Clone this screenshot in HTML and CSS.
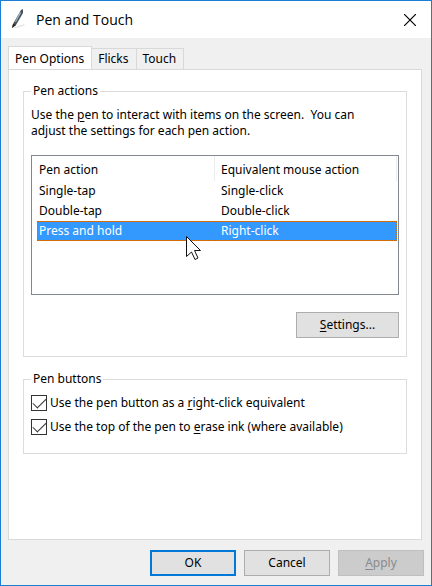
FILE: index.html
```html
<!DOCTYPE html>
<html lang="en">

<head>
    <meta charset="UTF-8">
    <meta name="viewport" content="width=device-width, initial-scale=1.0">
    <title>Pen and Touch</title>
    <link rel="stylesheet" href="styles.css">
</head>

<body>

    <div class="window">
        <header class="titlebar">
            <svg class="pen-icon" viewBox="0 0 16 22" aria-hidden="true">
                <path d="M2 19 L14 15 L12 17 L4 19 Z" fill="#dcdcdc" />
                <path d="M10 1 L12 0 L12 4 L5 16 L1 19 L2 15 Z" fill="#4b5258" />
                <path d="M9 3 L10 4 L5 13 L4 13 Z" fill="#9cc3d3" />
                <path d="M2 15 L5 16 L1 19 Z" fill="#222" />
            </svg>
            <h1>Pen and Touch</h1>
            <button class="close" aria-label="Close">
                <svg viewBox="0 0 12 12" aria-hidden="true">
                    <path d="M0 0 L12 12 M12 0 L0 12" stroke="#000" stroke-width="1.2" />
                </svg>
            </button>
        </header>

        <main class="content">
            <div class="tabs" role="tablist">
                <button class="tab active" role="tab" aria-selected="true">Pen Options</button>
                <button class="tab" role="tab" aria-selected="false">Flicks</button>
                <button class="tab" role="tab" aria-selected="false">Touch</button>
            </div>

            <div class="panel" role="tabpanel">
                <fieldset>
                    <legend>Pen actions</legend>
                    <p>Use the <u>p</u>en to interact with items on the screen.&nbsp; You can adjust the settings for each pen action.</p>
                    <div class="list">
                        <table>
                            <thead>
                                <tr>
                                    <th>Pen action</th>
                                    <th>Equivalent mouse action</th>
                                </tr>
                            </thead>
                            <tbody>
                                <tr>
                                    <td>Single-tap</td>
                                    <td>Single-click</td>
                                </tr>
                                <tr>
                                    <td>Double-tap</td>
                                    <td>Double-click</td>
                                </tr>
                                <tr class="selected">
                                    <td>Press and hold</td>
                                    <td>Right-click</td>
                                </tr>
                            </tbody>
                        </table>
                        <svg class="cursor" viewBox="0 0 16 25" aria-hidden="true">
                            <path d="M0.5 0.5 V20.5 L5.5 16 L9 23.5 L12 22 L8.5 14.5 H14.5 Z" fill="#fff" stroke="#111" />
                        </svg>
                    </div>
                    <div class="actions">
                        <button class="button settings"><u>S</u>ettings...</button>
                    </div>
                </fieldset>

                <fieldset>
                    <legend>Pen buttons</legend>
                    <div class="checks">
                        <label><input type="checkbox" checked><span>Use the pen button as a <u>r</u>ight-click equivalent</span></label>
                        <label><input type="checkbox" checked><span>Use the top of the pen to <u>e</u>rase ink (where available)</span></label>
                    </div>
                </fieldset>
            </div>
        </main>

        <footer class="footer">
            <button class="button default">OK</button>
            <button class="button">Cancel</button>
            <button class="button" disabled><u>A</u>pply</button>
        </footer>
    </div>

</body>

</html>
```

FILE: styles.css
```css
* {
    box-sizing: border-box;
}

body {
    margin: 0;
    font-family: 'Noto Sans', sans-serif;
    font-size: 12px;
    line-height: 16px;
    color: #000;
}

button {
    font: inherit;
    color: inherit;
}

u {
    text-underline-offset: 2px;
}

.window {
    display: flex;
    flex-direction: column;
    min-height: 100vh;
    background: #f0f0f0;
    border: 1px solid #1a7fd4;
}

.titlebar {
    display: flex;
    align-items: center;
    gap: 9px;
    height: 37px;
    padding: 0 15px 0 10px;
    background: #fff;
}

.pen-icon {
    width: 16px;
    height: 22px;
}

h1 {
    flex: 1;
    margin: 0;
    font-family: 'Open Sans', sans-serif;
    font-size: 14px;
    font-weight: 400;
}

.close {
    display: flex;
    padding: 0;
    border: none;
    background: none;
}

.close svg {
    width: 12px;
    height: 12px;
}

.content {
    flex: 1;
    display: flex;
    flex-direction: column;
    padding: 8px 9px 0 7px;
}

.tabs {
    display: flex;
    align-items: flex-end;
}

.tab {
    height: 21px;
    padding: 0 7px 0 6px;
    border: 1px solid #d9d9d9;
    border-width: 1px 1px 0 0;
    background: #f0f0f0;
}

.tab.active {
    height: 24px;
    margin-bottom: -1px;
    border-left-width: 1px;
    background: #fff;
}

.panel {
    flex: 1;
    padding: 13px 14px;
    background: #fff;
    border: 1px solid #d9d9d9;
}

fieldset {
    min-width: 0;
    margin: 0 0 14px;
    padding: 8px 7px 18px;
    border: 1px solid #dcdcdc;
}

legend {
    padding: 0 2px;
}

p {
    margin: 0 0 16px;
    padding-right: 16px;
}

.list {
    position: relative;
    height: 140px;
    padding: 0 1px 0 5px;
    border: 1px solid #828790;
}

table {
    width: 100%;
    border-spacing: 0;
    table-layout: fixed;
}

th {
    height: 25px;
    padding: 3px 6px 0 2px;
    border-right: 1px solid #ececec;
    font-weight: 400;
    text-align: left;
}

th:first-child {
    width: 178px;
}

td {
    height: 20px;
    padding: 0 2px;
}

th:last-child,
td:last-child {
    padding-left: 6px;
}

.selected td {
    background: #3399ff;
    color: #fff;
    border: 0 dotted #cc6600;
    border-width: 1px 0;
}

.selected td:last-child {
    border-right-width: 1px;
}

.cursor {
    position: absolute;
    top: 80px;
    left: 154px;
    width: 16px;
    height: 25px;
}

.actions {
    display: flex;
    justify-content: flex-end;
    margin-top: 17px;
}

.button {
    width: 86px;
    height: 26px;
    padding: 0;
    border: 1px solid #adadad;
    background: #e1e1e1;
}

.button.settings {
    width: 103px;
}

.button.default {
    border: 2px solid #0078d7;
}

.button:disabled {
    background: #cccccc;
    border-color: #bfbfbf;
    color: #8a8a8a;
}

.checks {
    display: flex;
    flex-direction: column;
    gap: 8px;
}

label {
    display: flex;
    align-items: center;
    gap: 3px;
}

input {
    appearance: none;
    width: 16px;
    height: 16px;
    margin: 0;
    border: 1px solid #333;
    background: #fff;
}

/* tick mark */
input:checked::before {
    content: "";
    display: block;
    width: 12px;
    height: 6px;
    margin: 2px 1px;
    border: solid #333;
    border-width: 0 0 1px 1px;
    transform: rotate(-45deg);
}

.footer {
    display: flex;
    justify-content: flex-end;
    gap: 8px;
    padding: 10px 7px 9px;
}
```
